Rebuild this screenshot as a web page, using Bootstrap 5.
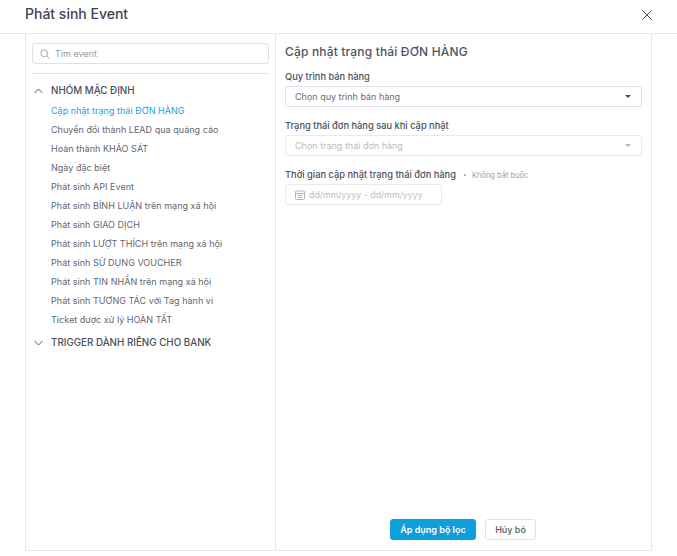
<!DOCTYPE html>
<html lang="vi">
<head>
<meta charset="utf-8">
<link href="https://cdn.jsdelivr.net/npm/bootstrap@5.3.0/dist/css/bootstrap.min.css" rel="stylesheet">
<style>
html,body{height:556px;overflow:hidden;background:#fff;font-family:Inter,"Liberation Sans",sans-serif;color:#3f4350;}
.dlg{height:556px;display:flex;flex-direction:column;}
.dlg-head{height:33px;padding:0 25px 0 25px;display:flex;justify-content:space-between;align-items:flex-start;}
.dlg-title{font-size:14px;font-weight:500;line-height:17px;margin:5px 0 0;color:#40444f;}
.dlg-close{border:0;background:none;padding:0;margin:9px 0 0;width:11px;height:11px;line-height:0;}
.dlg-rule{border-top:1px solid #e6e7ed;height:0;}
.panel{width:627px;height:517px;margin-left:25px;border:solid #e6e7ed;border-width:0 1px 1px 1px;display:flex;}
.side{width:250px;border-right:1px solid #e6e7ed;padding:9px 6px 0 6px;flex:none;}
.srch{height:21px;border:1px solid #dfe1e8;border-radius:3px;display:flex;align-items:center;padding-left:7px;gap:5px;font-size:9px;color:#9a9ca6;}
.side-rule{border-top:1px solid #e3e4ea;margin-top:9px;}
.grp{display:flex;align-items:center;font-size:9.8px;font-weight:500;color:#4a4e59;line-height:12px;height:12px;}
.grp svg{margin-left:2px;margin-right:8px;flex:none;}
.grp-a{margin-top:11px;}
.grp-b{margin-top:11px;}
.evs{list-style:none;margin:8px 0 0;padding:0 0 0 19px;}
.evs li{font-size:9px;line-height:12px;height:12px;margin-bottom:7px;color:#63666f;white-space:nowrap;letter-spacing:.03px;}
.evs li.on{color:#1ba3dd;}
.main{flex:1;padding:0 9px;display:flex;flex-direction:column;}
.main-title{font-size:12px;font-weight:500;line-height:15px;margin:10px 0 0;color:#50545e;letter-spacing:.17px;}
.lab{font-size:9.3px;font-weight:500;line-height:11px;color:#4d515c;display:block;}
.lab-1{margin-top:12px;}
.lab-2{margin-top:13px;}
.lab-3{margin-top:13px;}
.pick{height:21px;margin-top:4px;border:1px solid #dfe1e8;border-radius:3px;display:flex;align-items:center;justify-content:space-between;padding:0 10px 0 9px;font-size:9px;color:#686b75;}
.pick.off{color:#b9bbc2;border-color:#e9eaee;}
.caret{width:0;height:0;border:solid transparent;border-width:3px 3px 0;border-top-color:#4a4d57;}
.off .caret{border-top-color:#b3b5bd;}
.opt{font-weight:400;font-size:7.5px;color:#9a9ca6;margin-left:8px;}
.opt::before{content:"";display:inline-block;width:2px;height:2px;border-radius:50%;background:#9a9ca6;vertical-align:2px;margin-right:6px;}
.dates{width:157px;height:21px;margin-top:3px;border:1px solid #e9eaee;border-radius:3px;display:flex;align-items:center;padding-left:9px;gap:4px;font-size:8.8px;color:#bcbec6;}
.acts{margin-top:auto;padding:0 0 10px 105px;display:flex;gap:9px;}
.btn-go,.btn-no{height:21px;border-radius:3px;font-size:9px;font-weight:600;line-height:19px;padding:0;}
.btn-go{width:86px;background:#0c9fdc;border:1px solid #0c9fdc;color:#fff;}
.btn-no{width:51px;background:#fff;border:1px solid #e1e2e8;color:#555862;font-weight:500;}
</style>
</head>
<body>
<div class="dlg">
  <div class="dlg-head">
    <h5 class="dlg-title">Phát sinh Event</h5>
    <button class="dlg-close" type="button" aria-label="Đóng"><svg width="10" height="10" viewBox="0 0 10 10"><path d="M.5.5l9 9M9.5.5l-9 9" stroke="#4a4d57" stroke-width="1" fill="none"/></svg></button>
  </div>
  <div class="dlg-rule"></div>
  <div class="panel">
    <div class="side">
      <div class="srch"><svg width="10" height="10" viewBox="0 0 10 10" fill="none" stroke="#a5a7b0"><circle cx="4.2" cy="4.2" r="3.4"/><path d="M6.8 6.8l2.7 2.7"/></svg><span>Tìm event</span></div>
      <div class="side-rule"></div>
      <div class="grp grp-a"><svg width="9" height="6" viewBox="0 0 9 6" fill="none" stroke="#555862"><path d="M.5 5L4.5 1l4 4"/></svg>NHÓM MẶC ĐỊNH</div>
      <ul class="evs">
        <li class="on">Cập nhật trạng thái ĐƠN HÀNG</li>
        <li>Chuyển đổi thành LEAD qua quảng cáo</li>
        <li>Hoàn thành KHẢO SÁT</li>
        <li>Ngày đặc biệt</li>
        <li>Phát sinh API Event</li>
        <li>Phát sinh BÌNH LUẬN trên mạng xã hội</li>
        <li>Phát sinh GIAO DỊCH</li>
        <li>Phát sinh LƯỢT THÍCH trên mạng xã hội</li>
        <li>Phát sinh SỬ DỤNG VOUCHER</li>
        <li>Phát sinh TIN NHẮN trên mạng xã hội</li>
        <li>Phát sinh TƯƠNG TÁC với Tag hành vi</li>
        <li>Ticket được xử lý HOÀN TẤT</li>
      </ul>
      <div class="grp grp-b"><svg width="9" height="6" viewBox="0 0 9 6" fill="none" stroke="#555862"><path d="M.5 1l4 4 4-4"/></svg>TRIGGER DÀNH RIÊNG CHO BANK</div>
    </div>
    <div class="main">
      <h6 class="main-title">Cập nhật trạng thái ĐƠN HÀNG</h6>
      <label class="lab lab-1">Quy trình bán hàng</label>
      <div class="pick"><span>Chọn quy trình bán hàng</span><i class="caret"></i></div>
      <label class="lab lab-2">Trạng thái đơn hàng sau khi cập nhật</label>
      <div class="pick off"><span>Chọn trạng thái đơn hàng</span><i class="caret"></i></div>
      <label class="lab lab-3">Thời gian cập nhật trạng thái đơn hàng<span class="opt">Không bắt buộc</span></label>
      <div class="dates"><svg width="10" height="10" viewBox="0 0 10 10" fill="none" stroke="#b3b5bd"><rect x=".5" y="1" width="9" height="8.5" rx="1"/><path d="M.5 3.5h9M2.5 5.5h5M2.5 7.5h5"/></svg><span>dd/mm/yyyy - dd/mm/yyyy</span></div>
      <div class="acts">
        <button class="btn btn-go" type="button">Áp dụng bộ lọc</button>
        <button class="btn btn-no" type="button">Hủy bỏ</button>
      </div>
    </div>
  </div>
</div>
<script src="https://cdn.jsdelivr.net/npm/bootstrap@5.3.0/dist/js/bootstrap.bundle.min.js"></script>
</body>
</html>
